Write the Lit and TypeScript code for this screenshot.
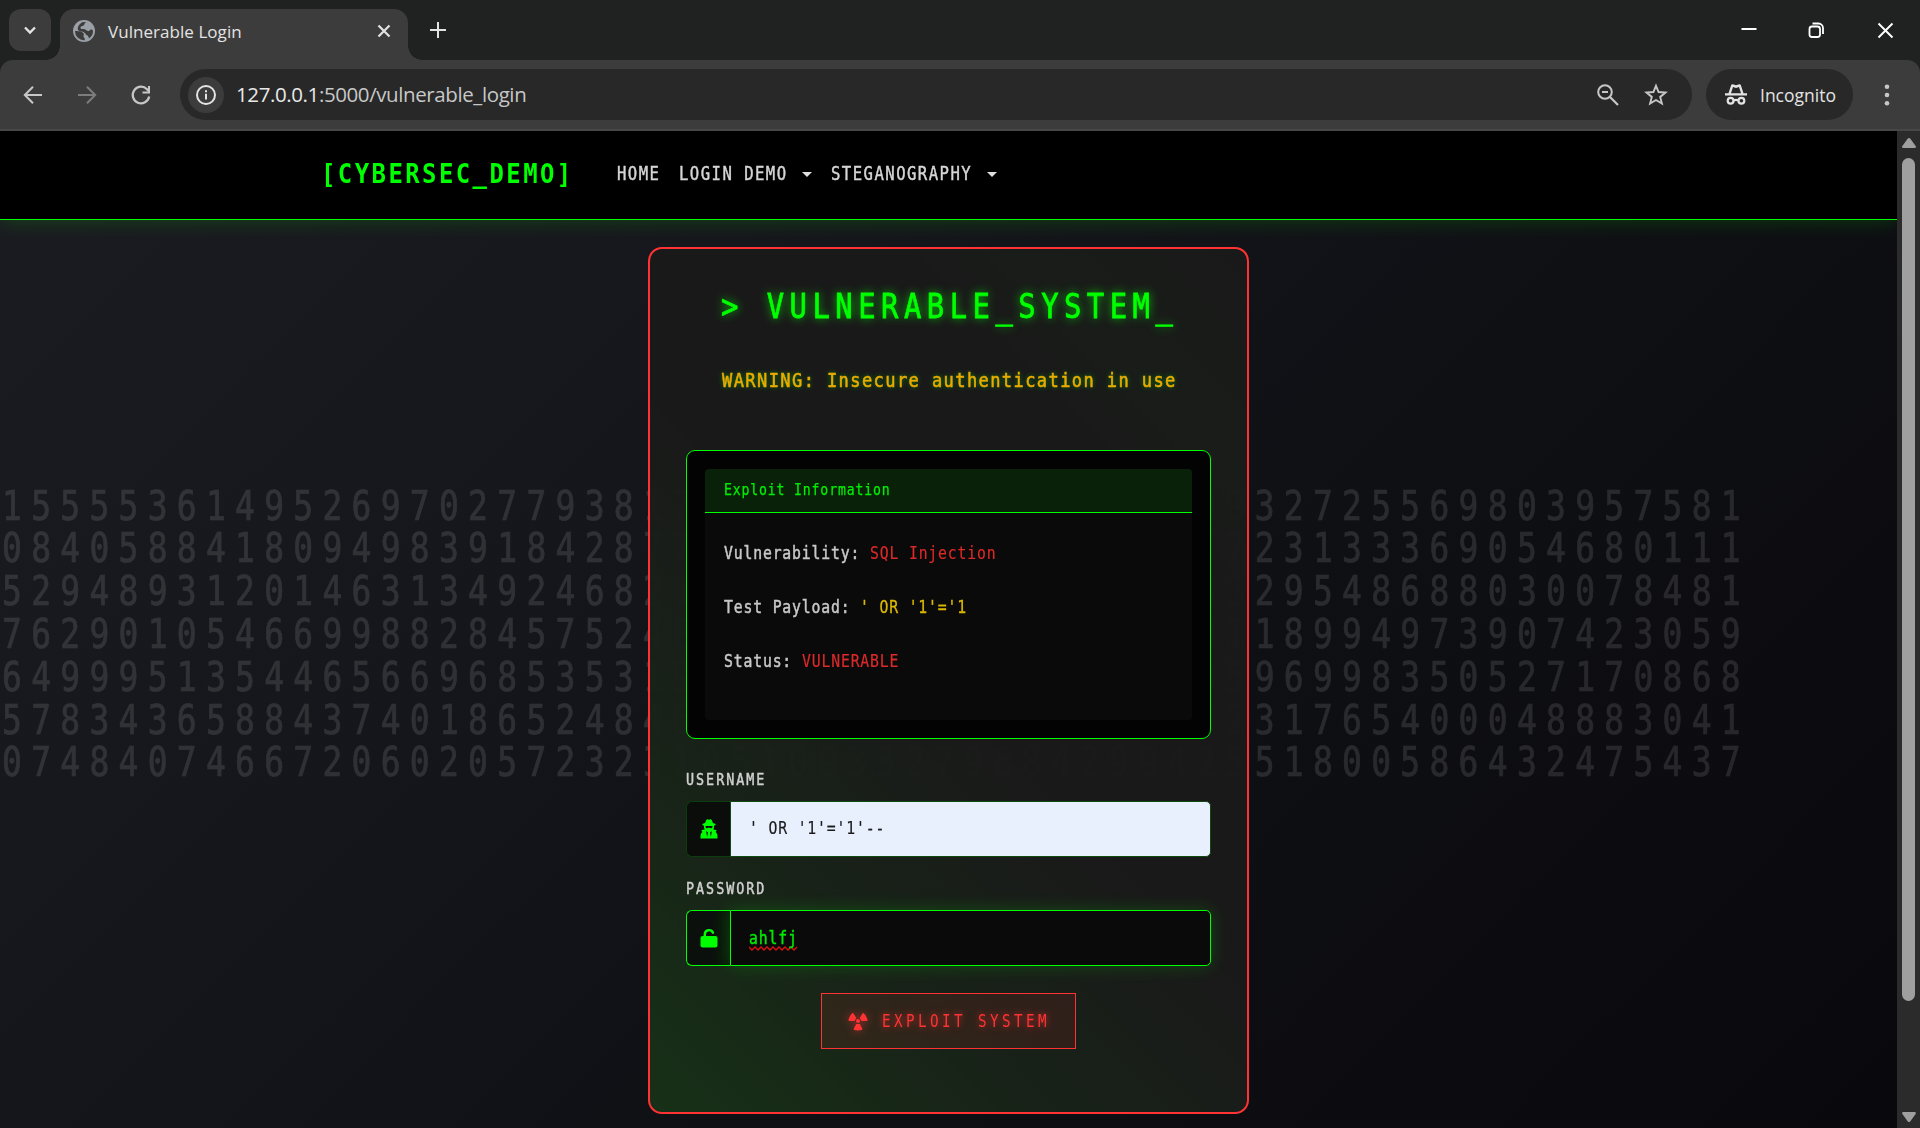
import { LitElement, html, svg, css } from "lit";
import { customElement, property } from "lit/decorators.js";

/* A run of terminal-style text with a fixed cell width, squeezed horizontally. */
@customElement("term-text")
class TermText extends LitElement {
  @property() text = "";
  static styles = css`
    :host {
      display: block;
      flex: none;
      height: 0;
      font-family: "DejaVu Sans Mono", "Liberation Mono", monospace;
      font-size: var(--fs);
      line-height: 0;
      white-space: pre;
    }
    .cells {
      display: block;
      width: calc(var(--n) * var(--adv));
      height: 0;
    }
    .glyphs {
      display: inline-block;
      line-height: 0;
      white-space: pre;
      transform: scaleX(var(--k, 0.8));
      transform-origin: 0 0;
      letter-spacing: calc(var(--adv) / var(--k, 0.8) - 0.602 * var(--fs));
      margin-left: calc((var(--adv) - var(--k, 0.8) * 0.602 * var(--fs)) / 2);
    }
  `;
  render() {
    return html`<span class="cells" style="--n:${this.text.length}"><span class="glyphs">${this.text}</span></span>`;
  }
}

const DIGITS = [
  "155553614952697027793817204863915820473619" + "9" + "32725569803957581",
  "084058841809498391842877301592648013957264" + "7" + "23133369054680111",
  "529489312014631349246821958047362918504736" + "3" + "29548688030078481",
  "762901054669988284575248103629574016382950" + "1" + "18994973907423059",
  "649995135446566968535319402857163920475813" + "5" + "96998350527170868",
  "578343658843740186524846019283750461928374" + "2" + "31765400048883041",
  "074840746672060205723231051093327988429942" + "5" + "51800586432475437",
];

const icon = (body: unknown, cls = "i24", box = "0 0 24 24") =>
  html`<svg class=${cls} viewBox=${box} aria-hidden="true">${body}</svg>`;

@customElement("app-root")
class AppRoot extends LitElement {
  static styles = css`
    * { box-sizing: border-box; }
    :host {
      display: flex;
      flex-direction: column;
      width: 1920px;
      height: 1128px;
      overflow: hidden;
      background: #202221;
      font-family: "Open Sans", "Noto Sans", sans-serif;
    }
    svg { display: block; flex: none; }
    .i24 { width: 24px; height: 24px; }
    .fill { fill: currentColor; }
    .line { fill: none; stroke: currentColor; }

    .tabs { display: flex; height: 60px; padding: 9px 0 0 9px; color: #e3e3e3; background: #202221; }
    .search { width: 42px; height: 42px; border-radius: 12px; background: #3c3c3c; display: grid; place-items: center; }
    .tab {
      margin-left: 9px; width: 348px; height: 51px; border-radius: 14px 14px 0 0; background: #3c3c3c;
      position: relative; display: flex; align-items: center; padding: 0 12px 8px 12px;
    }
    .tab::before, .tab::after {
      content: ""; position: absolute; bottom: 0; width: 14px; height: 14px;
    }
    .tab::before { left: -14px; background: radial-gradient(circle at 0 0, transparent 13.5px, #3c3c3c 14px); }
    .tab::after { right: -14px; background: radial-gradient(circle at 100% 0, transparent 13.5px, #3c3c3c 14px); }
    .title { margin-left: 12px; flex: 1; font-size: 17px; line-height: 24px; letter-spacing: 0.05px; padding-top: 2px; white-space: nowrap; }
    .plus { margin: 9px 0 0 18px; }
    .win { margin-left: auto; display: flex; gap: 44px; padding: 9px 23px 0 0; color: #fff; }

    .bar {
      display: flex; align-items: center; height: 69px; background: #3c3c3c; color: #c7c7c7;
      border-radius: 13px 13px 0 0; padding: 0 21px; flex: none;
    }
    .edge { height: 2px; background: #474747; flex: none; }
    .nav3 { display: flex; gap: 30px; width: 159px; }
    .dim { color: #7c7c7c; }
    .pill { background: #282828; height: 51px; border-radius: 26px; display: flex; align-items: center; }
    .omni { width: 1512px; padding: 0 24px 0 8px; gap: 24px; }
    .info { width: 36px; height: 36px; border-radius: 50%; background: #3c3c3c; display: grid; place-items: center; color: #e3e3e3; }
    .url { flex: 1; margin-left: -12px; padding-bottom: 1px; font-size: 20.5px; line-height: 28px; letter-spacing: -0.4px; color: #c7c7c7; white-space: nowrap; }
    .url b { font-weight: 400; color: #e8e8e8; }
    .incog { margin-left: 14px; width: 147px; padding-left: 18px; gap: 12px; color: #e3e3e3; font-size: 17.5px; }
    .dots { margin-left: auto; }

    .view { display: flex; height: 997px; }
    .page {
      width: 1897px; height: 997px; position: relative; overflow: hidden;
      display: flex; flex-direction: column; align-items: center;
      background: linear-gradient(135deg, #1b1c21 0%, #16171c 30%, #0f1014 60%, #09080d 100%);
    }
    .rain { position: absolute; left: 0; top: 374.5px; display: grid; grid-auto-rows: 42.83px; color: #fff; opacity: 0.11; }
    .rain term-text { --fs: 40.2px; --adv: 29.137px; --k: 0.82; margin-left: -3px; -webkit-text-stroke: 0.7px currentColor; }
    nav {
      align-self: stretch; height: 89px; flex: none; background: #000; border-bottom: 1px solid #00ff00;
      box-shadow: 0 0 20px rgba(0, 255, 0, 0.2); position: relative; color: #d6d6d6;
      display: flex; align-items: center; padding: 0 0 2px 320px;
    }
    .brand { --fs: 27.2px; --adv: 16.85px; --k: 0.88; color: #00ff00; font-weight: 700; }
    .link { --fs: 18.6px; --adv: 10.86px; --k: 0.84; -webkit-text-stroke: 0.45px currentColor; }
    .home { margin-left: 44px; }
    .l2 { margin-left: 18.5px; }
    .l3 { margin-left: 18px; }
    .caret { border: 5.5px solid transparent; border-top-color: #e0e0e0; border-bottom: 0; margin-left: 14.5px; }
    .l3 + .caret { margin-left: 16.5px; }

    .card {
      position: relative; margin-top: 27px; width: 601px; height: 867px; flex: none;
      border: 2px solid #ff3333; border-radius: 14px; padding: 0 36px;
      background:
        linear-gradient(45deg, rgba(0, 255, 0, 0.1) 0%, rgba(0, 255, 0, 0.045) 25%, rgba(0, 255, 0, 0) 50%, rgba(0, 255, 0, 0) 76%, rgba(0, 255, 0, 0.015) 84%, rgba(0, 255, 0, 0) 100%),
        rgba(26, 26, 26, 0.97);
      display: flex; flex-direction: column;
    }
    .h1 { --fs: 34.4px; --adv: 22.87px; --k: 0.84; color: #00ff00; margin: 57px 0 0 32.500px; text-shadow: 0 0 10px rgba(0, 255, 0, 0.9); -webkit-text-stroke: 0.8px currentColor; }
    .warn { --fs: 19.4px; --adv: 11.665px; --k: 0.88; color: #eaab00; margin: 75px 0 0 35px; text-shadow: 0 0 6px rgba(0, 255, 0, 0.55); -webkit-text-stroke: 0.55px currentColor; }
    .term { margin-top: 69px; height: 289px; border: 1px solid #00ff00; border-radius: 9px; background: #030303; padding: 18px; width: 525px; flex: none; }
    .panel { height: 251px; border-radius: 4px; overflow: hidden; background: #0a0a0a; }
    .head { height: 44px; background: #082108; border-bottom: 1px solid #00ff00; padding: 20.5px 0 0 18.5px; }
    .head term-text { --fs: 15px; --adv: 8.76px; --k: 0.88; color: #00ef00; -webkit-text-stroke: 0.25px currentColor; }
    .rows { display: grid; grid-auto-rows: 54px; padding: 40px 0 0 18.5px; }
    .row { display: flex; --fs: 17.6px; --adv: 9.73px; --k: 0.84; }
    .row .k { color: #c8c8c8; -webkit-text-stroke: 0.5px currentColor; }
    .row .red { color: #dc2a2a; -webkit-text-stroke: 0.2px currentColor; }
    .row .yel { color: #dcb800; -webkit-text-stroke: 0.3px currentColor; }
    .label { --fs: 15.6px; --adv: 10.05px; --k: 0.86; color: #d0d0d0; -webkit-text-stroke: 0.45px currentColor; margin-left: -0.5px; }
    .lu { margin-top: 41px; }
    .lp { margin-top: 32px; }
    .field { margin-top: 20.5px; height: 56px; width: 525px; display: flex; flex: none; border-radius: 6px; --fs: 17.6px; --adv: 9.73px; --k: 0.84; }
    .lp + .field { margin-top: 21.5px; }
    .addon { width: 44px; border: 1px solid #0c3d0c; border-right: 0; border-radius: 6px 0 0 6px; background: #0a0d0a; color: #00ff00; display: grid; place-items: center; }
    .addon svg { width: 18px; height: 20px; }
    .box { flex: 1; border: 1px solid #0e4a0e; border-radius: 0 5px 5px 0; padding: 26px 0 0 17.5px; }
    .box term-text { -webkit-text-stroke: 0.2px currentColor; }
    .auto { background: #e8f0fe; color: #1a1a1a; }
    .focus .addon { border-color: #00ff00; background: linear-gradient(90deg, #0c100c 60%, #0a1c0a); }
    .focus .box { border-color: #00ff00; background: #0a0a0a; color: #00ea00; box-shadow: 0 0 18px rgba(0, 255, 0, 0.2); padding-top: 27px; }
    .focus .box term-text { -webkit-text-stroke: 0.45px currentColor; }
    .wave { margin-top: 8px; width: 50px; height: 5px; }
    .btn {
      margin: 27px 0 0 135px; width: 255px; height: 56px; flex: none; border: 1px solid #ff3333;
      background: rgba(255, 51, 51, 0.1); display: flex; align-items: center; color: #ff3333; padding: 0 0 0 25.5px; gap: 12.500px;
      text-shadow: 0 0 8px rgba(255, 51, 51, 0.8);
    }
    .btn term-text { --fs: 17.4px; --adv: 12px; --k: 0.82; }
    .btn svg { filter: drop-shadow(0 0 4px rgba(255, 51, 51, 0.6)); width: 20px; height: 20px; }

    .scroll { width: 23px; background: #2b2b2b; display: flex; flex-direction: column; align-items: center; padding-top: 6px; color: #9f9f9f; }
    .scroll svg { width: 16px; height: 12px; }
    .thumb { width: 13px; height: 843px; margin: 9px 0 110px; border-radius: 7px; background: #9f9f9f; flex: none; }
  `;

  chrome() {
    return html`
      <div class="tabs">
        <div class="search">${icon(svg`<path class="line" stroke-width="2.4" d="M7 9.500l5 5 5-5"/>`)}</div>
        <div class="tab">
          ${icon(svg`<circle cx="12" cy="12" r="11" fill="#9aa0a6"/><path fill="#3c3c3c" d="M3 12c3-.3 7 .3 8.500 2.200 1 1.300-.3 2 0 3.300.2 1 1.700 1.200 1.300 3.700A9 9 0 0 1 3 12zM14.500 3.300C12 4 13 5.500 11.500 6.500 10.300 7.300 8.500 7 8.500 8.800s2.500 1.200 4 1.400 2 1.800 3.600 1.900 1.600-1.700 3-1.700 1.400.6 1.900 1.200A9 9 0 0 1 17 19.500c-.4-1.500-.6-3-2.600-3.500-1.500-2.800-3.900-3.700-6.400-3.700-1.500-.4-2.500-1.500-2.300-3 .3-2.200 2.300-4.700 5-6.200z"/>`)}
          <span class="title">Vulnerable Login</span>
          ${icon(svg`<path class="line" stroke-width="2.200" d="M6.500 6.500l11 11M17.500 6.500l-11 11"/>`)}
        </div>
        <div class="plus">${icon(svg`<path class="line" stroke-width="2" d="M12 4v16M4 12h16"/>`)}</div>
        <div class="win">
          ${icon(svg`<path class="line" stroke-width="2" d="M4.500 11h15"/>`)}
          ${icon(svg`<rect class="line" stroke-width="1.800" x="4.500" y="8.500" width="10.500" height="10.500" rx="2.500"/><path class="line" stroke-width="1.800" d="M7.500 5.500h6a4.500 4.500 0 0 1 4.500 4.500v6"/>`)}
          ${icon(svg`<path class="line" stroke-width="1.900" d="M5.500 5.500l14 14M19.500 5.500l-14 14"/>`)}
        </div>
      </div>
      <div class="bar">
        <div class="nav3">
          ${icon(svg`<path class="line" stroke-width="2" d="M21 12H4M12 3.800L3.800 12l8.200 8.200"/>`)}
          <span class="dim">${icon(svg`<path class="line" stroke-width="2" d="M3 12h17M12 3.800l8.200 8.200-8.200 8.200"/>`)}</span>
          ${icon(svg`<path class="line" stroke-width="2.200" d="M20.200 13.500a8.300 8.300 0 1 1-2.200-7.300l2 2"/><path class="fill" d="M21 3v7.500h-7.500v-2h5.500V3z"/>`)}
        </div>
        <div class="pill omni">
          <div class="info">${icon(svg`<circle class="line" stroke-width="2" cx="12" cy="12" r="9"/><path class="line" stroke-width="2" d="M12 10.800v5.700M12 7.300v2"/>`)}</div>
          <span class="url"><b>127.0.0.1</b>:5000/vulnerable_login</span>
          ${icon(svg`<circle class="line" stroke-width="2" cx="9" cy="9" r="6.800"/><path class="line" stroke-width="2.200" d="M14 14l8 8M6 9h6"/>`)}
          ${icon(svg`<path class="line" stroke-width="1.900" stroke-linejoin="miter" d="M12 2.800l2.600 6.200 6.900.5-5.300 4.400 1.700 6.700-5.900-3.600-5.900 3.600 1.700-6.700-5.300-4.400 6.900-.5z"/>`)}
        </div>
        <div class="pill incog">
          ${icon(svg`<path class="fill" d="M1 10.300h22v2.200H1zM4.400 10.500L7.100 2.200c.3-.8 1-1.100 1.700-.9l3.200 1 3.200-1c.7-.2 1.400.1 1.700.9l2.700 8.300h-2.500L15 4l-3 .9L9 4l-2.100 6.500z"/><circle class="line" stroke-width="2.200" cx="6.600" cy="17.800" r="2.900"/><circle class="line" stroke-width="2.200" cx="17.400" cy="17.800" r="2.900"/><path class="line" stroke-width="2.200" d="M9.500 17.500q2.500-1.200 5 0"/>`)}
          <span>Incognito</span>
        </div>
        <div class="dots">${icon(svg`<g class="fill"><circle cx="12" cy="3.800" r="2.300"/><circle cx="12" cy="12" r="2.300"/><circle cx="12" cy="20.200" r="2.300"/></g>`)}</div>
      </div>
      <div class="edge"></div>`;
  }

  render() {
    const blade = "M8.200 13h3.600l2.400 4.400q.6 1.300-.8 1.600-3.400.8-6.800 0-1.400-.3-.8-1.600z";
    return html`
      ${this.chrome()}
      <div class="view">
        <div class="page">
          <div class="rain">${DIGITS.map((d) => html`<div><term-text .text=${d}></term-text></div>`)}</div>
          <nav>
            <term-text class="brand" .text=${"[CYBERSEC_DEMO]"}></term-text>
            <term-text class="link home" .text=${"HOME"}></term-text>
            <term-text class="link l2" .text=${"LOGIN DEMO"}></term-text><i class="caret"></i>
            <term-text class="link l3" .text=${"STEGANOGRAPHY"}></term-text><i class="caret"></i>
          </nav>
          <section class="card">
            <term-text class="h1" .text=${"> VULNERABLE_SYSTEM_"}></term-text>
            <term-text class="warn" .text=${"WARNING: Insecure authentication in use"}></term-text>
            <div class="term">
              <div class="panel">
                <div class="head"><term-text .text=${"Exploit Information"}></term-text></div>
                <div class="rows">
                  <div class="row"><term-text class="k" .text=${"Vulnerability: "}></term-text><term-text class="red" .text=${"SQL Injection"}></term-text></div>
                  <div class="row"><term-text class="k" .text=${"Test Payload: "}></term-text><term-text class="yel" .text=${"' OR '1'='1"}></term-text></div>
                  <div class="row"><term-text class="k" .text=${"Status: "}></term-text><term-text class="red" .text=${"VULNERABLE"}></term-text></div>
                </div>
              </div>
            </div>
            <term-text class="label lu" .text=${"USERNAME"}></term-text>
            <div class="field">
              <div class="addon">${icon(svg`<path class="fill" d="M6.300 1C7.300-.4 8.300.8 9 .8s1.700-1.200 2.700.2c.6 1 .9 2 1.100 3 1.600.4 2.900.9 2.900 1.500 0 .5-.7.9-1.700 1.200V8.500l-.6 2 2.600.4c.5.100.7.5.5.9L15.600 13c1.300.9 1.900 2.700 1.900 4.800V19.500H.5v-1.700c0-2.100.6-3.900 1.900-4.800l-.9-1.200c-.2-.4 0-.8.5-.9l2.600-.4-.6-2V6.700c-1-.3-1.700-.7-1.700-1.200 0-.6 1.300-1.100 2.900-1.500.2-1 .5-2 1.100-3z"/><path fill="#0a0d0a" d="M5.500 7h7v.8l-.6 1.400-2-.2L9 8.400 8.100 9l-2 .2-.6-1.400zM6.200 12l1.800 1.400-.9 4.600zM11.800 12L10 13.400l.9 4.600z"/>`, "", "0 0 18 20")}</div>
              <div class="box auto"><term-text .text=${"' OR '1'='1'--"}></term-text></div>
            </div>
            <term-text class="label lp" .text=${"PASSWORD"}></term-text>
            <div class="field focus">
              <div class="addon">${icon(svg`<rect class="fill" x=".5" y="8" width="17" height="11.500" rx="2.200"/><path class="line" stroke-width="2.400" stroke-linecap="round" d="M4.800 9V6a4.300 4.300 0 0 1 8.200-1.300"/>`, "", "0 0 18 20")}</div>
              <div class="box">
                <term-text .text=${"ahlfj"}></term-text>
                ${icon(svg`<path fill="none" stroke="#e01010" stroke-width="1.300" d="M0 1l3 3 3-3 3 3 3-3 3 3 3-3 3 3 3-3 3 3 3-3 3 3 3-3 3 3 3-3 3 3 3-3"/>`, "wave", "0 0 50 5")}
              </div>
            </div>
            <div class="btn">
              ${icon(svg`<g class="fill"><circle cx="10" cy="10" r="2"/><path d=${blade}/><path transform="rotate(120 10 10)" d=${blade}/><path transform="rotate(240 10 10)" d=${blade}/></g>`, "", "0 0 20 20")}
              <term-text .text=${"EXPLOIT SYSTEM"}></term-text>
            </div>
          </section>
        </div>
        <div class="scroll">
          <svg viewBox="0 0 16 12"><path class="fill" d="M6.800 1.500q1.200-1 2.400 0l5.600 7.800q.6 1.700-1 1.700H2.200q-1.600 0-1-1.700z"/></svg>
          <div class="thumb"></div>
          <svg viewBox="0 0 16 12"><path class="fill" d="M6.800 10.500q1.200 1 2.400 0l5.600-7.800q.6-1.700-1-1.700H2.200q-1.600 0-1 1.700z"/></svg>
        </div>
      </div>`;
  }
}
